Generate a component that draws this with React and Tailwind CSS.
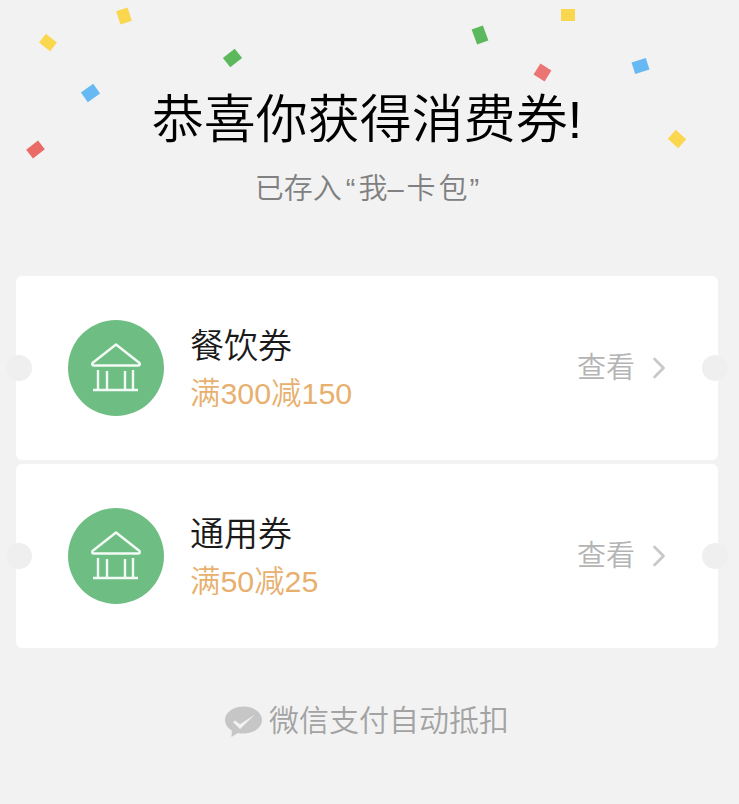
import React from "react";
import { ChevronRight } from "lucide-react";

// bits of confetti over the header
const confetti = [
  { className: "left-[41px] top-[37px] w-[14px] h-[11px] rotate-[38deg] bg-[#fbd64f]" },
  { className: "left-[118px] top-[9px] w-[12px] h-[14px] -rotate-[18deg] bg-[#fbd64f]" },
  { className: "left-[225px] top-[52px] w-[15px] h-[12px] -rotate-[38deg] bg-[#5cb85c]" },
  { className: "left-[83px] top-[87px] w-[15px] h-[12px] -rotate-[35deg] bg-[#66b9f2]" },
  { className: "left-[28px] top-[144px] w-[15px] h-[11px] -rotate-[38deg] bg-[#ea6a66]" },
  { className: "left-[474px] top-[27px] w-[12px] h-[16px] -rotate-[20deg] bg-[#5cb85c]" },
  { className: "left-[561px] top-[9px] w-[14px] h-[12px] bg-[#fbd64f]" },
  { className: "left-[536px] top-[66px] w-[13px] h-[13px] rotate-[32deg] bg-[#ea7573]" },
  { className: "left-[633px] top-[60px] w-[15px] h-[12px] -rotate-[18deg] bg-[#66b9f2]" },
  { className: "left-[670px] top-[133px] w-[14px] h-[12px] rotate-[42deg] bg-[#fbd64f]" },
];

const coupons = [
  { name: "餐饮券", desc: "满300减150" },
  { name: "通用券", desc: "满50减25" },
];

const BankIcon = () => (
  <svg width="52" height="50" viewBox="0 0 52 50" fill="none" stroke="#f4fbf6" strokeWidth="2.400">
    <path d="M26 1.500 L49.500 20 Q50.500 22.500 48 22.500 L4 22.500 Q1.500 22.500 2.500 20 Z" strokeLinejoin="round" />
    <path d="M8 27V46M17 28V46M35 28V46M43 27V46" />
    <path d="M3 47H48" />
  </svg>
);

const WechatPay = () => (
  <svg width="37" height="32" viewBox="0 0 37 32" className="mt-[2px]">
    <path
      d="M18.500 0.500C8.300 0.500 0 6.500 0 14c0 4.300 2.700 8.100 6.800 10.600L6.500 31l6.500-4.100c1.700.4 3.600.6 5.500.6C28.700 27.500 37 21.500 37 14S28.700 0.500 18.500 0.500z"
      fill="#c6c6c6"
    />
    <path d="M8 16l2-1.500 5 3.800L30 8.500 15 23z" fill="#f2f2f2" />
  </svg>
);

const CouponCard = ({ name, desc }) => (
  <div className="relative h-[184px] rounded-[6px] bg-white flex items-center pl-[52px] pr-[41px]">
    <span className="absolute left-[-10px] top-[79px] w-[26px] h-[26px] rounded-full bg-[#efefef]" />
    <span className="absolute right-[-10px] top-[79px] w-[26px] h-[26px] rounded-full bg-[#efefef]" />
    <div className="w-[96px] h-[96px] rounded-full bg-[#6ebe83] flex items-center justify-center shrink-0">
      <BankIcon />
    </div>
    <div className="ml-[26px] flex-1">
      <p className="text-[34px] leading-[46px] text-[#1a1a1a]">{name}</p>
      <p className="mt-[4px] text-[30.400px] leading-[40px] text-[#e8b06f]">{desc}</p>
    </div>
    <span className="text-[29px] pt-[2px] text-[#b4b4b4]">查看</span>
    <ChevronRight className="ml-[6px] text-[#c8c8c8]" size={36} strokeWidth={1.800} />
  </div>
);

export default function App() {
  return (
    <div
      className="relative w-[739px] h-[804px] overflow-hidden bg-[#f2f2f2] font-[350]"
      style={{ fontFamily: '"Liberation Sans", "Noto Sans CJK SC", sans-serif' }}
    >
      {confetti.map((c, i) => (
        <span key={i} className={`absolute ${c.className}`} />
      ))}

      <div className="flex flex-col items-center pt-[84px]">
        <h1 className="pr-[5px] text-[52px] leading-[72px] font-[350] text-black whitespace-nowrap">恭喜你获得消费券!</h1>
        <p className="mt-[11px] pr-[5px] text-[29px] leading-[44px] text-[#808080] whitespace-nowrap">
          已存入<span className="ml-[4px] mr-[3px]">“</span>我<span className="mr-[3px]">–</span>卡<span className="ml-[3px]">包</span><span className="ml-[2px]">”</span>
        </p>
      </div>

      <div className="mt-[65px] ml-[16px] mr-[21px] flex flex-col gap-[4px]">
        {coupons.map((c) => (
          <CouponCard key={c.name} name={c.name} desc={c.desc} />
        ))}
      </div>

      <div className="mt-[51px] ml-[225px] flex items-center gap-[7px]">
        <WechatPay />
        <span className="text-[30px] leading-[44px] text-[#a3a3a3]">微信支付自动抵扣</span>
      </div>
    </div>
  );
}
